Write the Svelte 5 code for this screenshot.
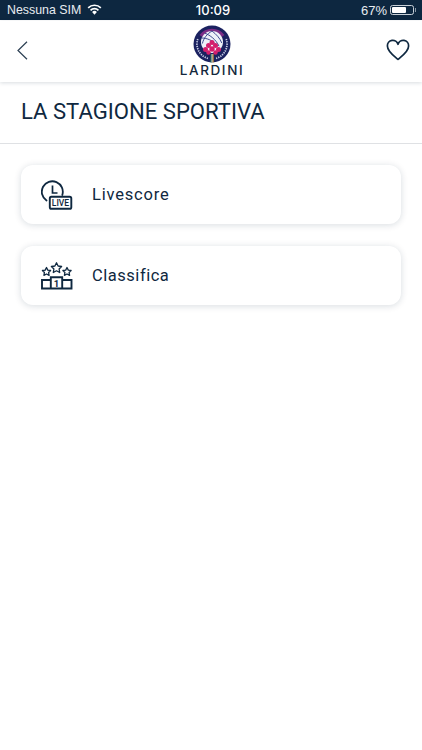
<script>
  const items = [
    { label: 'Livescore', icon: 'live', tight: false },
    { label: 'Classifica', icon: 'podium', tight: true }
  ];
</script>

<div class="page">
  <div class="status">
    <div class="st-left">
      <span>Nessuna SIM</span>
      <svg class="wifi" width="15" height="11" viewBox="0 0 16 12" aria-hidden="true">
        <path d="M8 11.6 5.400 8.800a3.600 3.600 0 0 1 5.200 0Z" fill="#fff"/>
        <path d="M3.700 6.900a6 6 0 0 1 8.600 0" fill="none" stroke="#fff" stroke-width="1.800"/>
        <path d="M1.100 4.200a9.700 9.700 0 0 1 13.800 0" fill="none" stroke="#fff" stroke-width="1.800"/>
      </svg>
    </div>
    <span class="time">10:09</span>
    <div class="st-right">
      <span>67%</span>
      <div class="battery"><div class="level"></div></div>
      <div class="nub"></div>
    </div>
  </div>

  <header class="nav">
    <svg class="back" width="12" height="20" viewBox="0 0 12 20" aria-hidden="true">
      <path d="M10 .8 1 9.500l9 8.700" fill="none" stroke="#2b3f52" stroke-width="1.200"/>
    </svg>
    <div class="logo">
      <svg width="38" height="38" viewBox="0 0 38 38" aria-hidden="true">
        <circle cx="19" cy="19" r="18.500" fill="#1b2260"/>
        <path d="M6.500 10a15.500 15.500 0 0 1 25 0l-3 2a12 12 0 0 0-19 0Z" fill="#7b2d86"/>
        <path d="M4.800 14a15 15 0 0 0 11 19.600M33.200 14a15 15 0 0 1-11 19.600" fill="none" stroke="#c9cee6" stroke-width="1.700" stroke-dasharray="1.300 1"/>
        <circle cx="19" cy="17" r="11" fill="#eef1f8"/>
        <g fill="none" stroke="#2c3a86" stroke-width="0.900">
          <path d="M19 6c-5 3-8.400 7.200-9.600 12.500M19 6c4 3 8 7.200 9.800 12M12 8.200c5 2 11 6.300 14 13M8.400 13c5 0 11 2 15 7"/>
        </g>
        <rect x="17.600" y="29" width="1" height="8.500" fill="#2f8f4e"/>
        <rect x="18.600" y="29" width="1" height="8.500" fill="#f3f3f3"/>
        <rect x="19.600" y="29" width="1" height="8.500" fill="#e0a030"/>
        <g fill="#d41f6d">
          <circle cx="19" cy="17.500" r="2.500"/><circle cx="15.500" cy="20.500" r="2.500"/><circle cx="22.500" cy="20.500" r="2.500"/>
          <circle cx="12.500" cy="24.500" r="2.500"/><circle cx="19" cy="24" r="2.700"/><circle cx="25.500" cy="24.500" r="2.500"/>
          <circle cx="15.500" cy="27.500" r="2.200"/><circle cx="22.500" cy="27.500" r="2.200"/>
        </g>
      </svg>
      <span class="brand">LARDINI</span>
    </div>
    <svg class="heart" width="24" height="22" viewBox="0 0 24 22" aria-hidden="true">
      <path d="M12 20.400C8 17 1.400 12.600 1.400 7A5.400 5.400 0 0 1 12 5.300 5.400 5.400 0 0 1 22.600 7c0 5.600-6.600 10-10.600 13.400Z" fill="none" stroke="#0f2840" stroke-width="1.700" stroke-linejoin="round"/>
    </svg>
  </header>

  <h1 class="title">LA STAGIONE SPORTIVA</h1>

  <div class="list">
    {#each items as item}
      <div class="card">
        <div class="icon">
          {#if item.icon === 'live'}
            <svg width="32" height="30" viewBox="0 0 32 30" aria-hidden="true">
              <path d="M5.500 20.500A10.500 10.500 0 1 1 21.300 15" fill="none" stroke="#0f2840" stroke-width="1.800" stroke-linecap="round"/>
              <path d="M11.500 5.500V13H16.500" fill="none" stroke="#0f2840" stroke-width="1.700"/>
              <rect x="8.800" y="16.800" width="21.500" height="12" rx="1.600" fill="#fff" stroke="#0f2840" stroke-width="1.900"/>
              <text x="19.500" y="26" class="live">LIVE</text>
            </svg>
          {:else}
            <svg width="32" height="28" viewBox="0 0 32 28" aria-hidden="true">
              <g fill="none" stroke="#0f2840" stroke-width="1.300" stroke-linejoin="round">
                <path d="M5.500 5.500l1.300 2.600 2.800.4-2 2 .5 2.800-2.600-1.300-2.600 1.300.5-2.800-2-2 2.800-.4Z"/>
                <path d="M15.500 .8l1.600 3.200 3.500.5-2.500 2.500.6 3.500-3.200-1.700-3.200 1.700.6-3.500-2.500-2.500 3.500-.5Z"/>
                <path d="M26 5.500l1.300 2.600 2.800.4-2 2 .5 2.800-2.600-1.300-2.600 1.300.5-2.800-2-2 2.800-.4Z"/>
              </g>
              <path d="M1 26.500V18h8.800V15.200h11.400V18H30.500V26.500Z M9.800 18V26.500M21.200 18V26.500" fill="none" stroke="#0f2840" stroke-width="1.900"/>
              <text x="15.500" y="24.800" class="one">1</text>
            </svg>
          {/if}
        </div>
        <span class="label" class:tight={item.tight}>{item.label}</span>
      </div>
    {/each}
  </div>
</div>

<style>
  :global(body) {
    margin: 0;
    background: #fff;
  }
  .page {
    width: 422px;
    height: 750px;
    overflow: hidden;
    background: #fff;
    font-family: Roboto, sans-serif;
    color: #0f2840;
  }
  .status {
    height: 20px;
    background: #0d2740;
    color: #e8ecf0;
    font-family: "Liberation Sans", sans-serif;
    font-size: 13px;
    display: grid;
    grid-template-columns: 1fr auto 1fr;
    align-items: center;
    padding: 0 6px 0 7px;
  }
  .st-left {
    display: flex;
    align-items: center;
    gap: 6px;
    font-size: 12.4px;
  }
  .wifi {
    margin-top: -1px;
  }
  .time {
    font-family: Inter, sans-serif;
    font-weight: 500;
    font-size: 13px;
    margin-left: 3px;
    color: #fff;
  }
  .st-right {
    display: flex;
    align-items: center;
    justify-content: flex-end;
  }
  .battery {
    box-sizing: border-box;
    width: 24px;
    height: 10px;
    margin-left: 3px;
    border: 1px solid #c8d0d8;
    border-radius: 2.5px;
    padding: 1px;
  }
  .level {
    width: 14px;
    height: 6px;
    background: #fff;
    border-radius: 1px;
  }
  .nub {
    width: 1.5px;
    height: 4px;
    margin-left: 0.5px;
    background: #8a98a6;
  }
  .nav {
    height: 61px;
    margin-top: 1px;
    box-shadow: 0 1px 4px rgba(15, 40, 64, 0.16);
    display: flex;
    align-items: center;
    justify-content: space-between;
    padding: 0 12px 0 17px;
    position: relative;
  }
  .back {
    margin-top: -1px;
  }
  .heart {
    margin-top: -3px;
  }
  .logo {
    display: flex;
    flex-direction: column;
    align-items: center;
    margin-left: 9px;
    margin-top: -1px;
  }
  .brand {
    font-family: Inter, sans-serif;
    font-size: 13.5px;
    font-weight: 500;
    letter-spacing: 1.6px;
    line-height: 14px;
    margin-top: 0;
    color: #14283c;
  }
  .title {
    margin: 0;
    height: 62px;
    box-sizing: border-box;
    border-bottom: 1px solid #dfe1e4;
    padding-left: 21px;
    line-height: 58px;
    font-size: 22.1px;
    font-weight: 400;
    color: #0f2840;
  }
  .list {
    display: flex;
    flex-direction: column;
    gap: 22px;
    padding: 21px 21px 0;
  }
  .card {
    height: 59px;
    border-radius: 12px;
    background: #fff;
    box-shadow: 0 1px 7px rgba(15, 40, 64, 0.16);
    display: flex;
    align-items: center;
  }
  .icon {
    width: 32px;
    height: 30px;
    margin-left: 20px;
    display: flex;
    align-items: center;
  }
  .label {
    margin-left: 19px;
    font-size: 16.5px;
    font-weight: 400;
    letter-spacing: 0.8px;
    color: #0f2840;
  }
  .label.tight {
    letter-spacing: 0.52px;
  }
  .live {
    font-family: Roboto, sans-serif;
    font-size: 8.5px;
    font-weight: 500;
    text-anchor: middle;
    fill: #0f2840;
  }
  .one {
    font-family: Roboto, sans-serif;
    font-size: 9.5px;
    font-weight: 700;
    text-anchor: middle;
    fill: #0f2840;
  }
</style>
